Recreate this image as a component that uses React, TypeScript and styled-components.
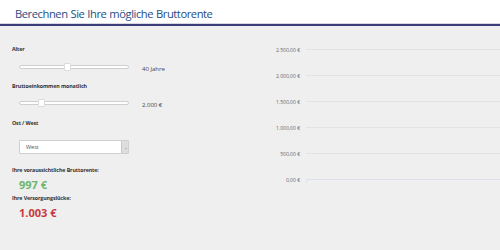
import React from "react";
import styled, { createGlobalStyle } from "styled-components";

const Global = createGlobalStyle`
  html, body { margin: 0; padding: 0; background: #efefef; }
  body { font-family: "Open Sans", "Liberation Sans", sans-serif; width: 500px; height: 250px; overflow: hidden; }
`;

const Header = styled.header`
  height: 23px;
  background: #ffffff;
  border-bottom: 1px solid #d8d8e4;
  display: flex;
  align-items: center;
  padding-left: 15px;
  position: relative;
  &::after {
    content: "";
    position: absolute;
    left: 0;
    right: 0;
    bottom: -3px;
    height: 2px;
    background: #3a3d7c;
  }
`;

const Title = styled.h1`
  margin: 0;
  font-family: "Open Sans", sans-serif;
  font-weight: 400;
  font-size: 11.2px;
  letter-spacing: -0.45px;
  word-spacing: 0.5px;
  color: #1e4e86;
  padding-top: 3px;
`;

const Body = styled.main`
  display: flex;
  padding-top: 3px;
`;

const Form = styled.section`
  width: 250px;
  padding-left: 12px;
  box-sizing: border-box;
  display: flex;
  flex-direction: column;
`;

const Label = styled.div<{ $mt: number }>`
  margin-top: ${(p) => p.$mt}px;
  font-size: 5.3px;
  font-weight: 700;
  letter-spacing: -0.1px;
  color: #333;
  line-height: 8px;
  height: 8px;
`;

const SliderRow = styled.div<{ $mt: number }>`
  margin-top: ${(p) => p.$mt}px;
  display: flex;
  align-items: center;
  height: 10px;
  padding-left: 7px;
`;

const Track = styled.div`
  position: relative;
  width: 110px;
  height: 4px;
  box-sizing: border-box;
  background: #fff;
  border: 1px solid #cfcfcf;
  border-radius: 3px;
`;

const Thumb = styled.div`
  position: absolute;
  top: -3px;
  width: 7px;
  height: 8px;
  box-sizing: border-box;
  background: #fff;
  border: 1px solid #dcdcdc;
  border-radius: 1px;
`;

const Value = styled.span`
  margin-left: 13px;
  font-size: 6px;
  color: #444;
  padding-top: 4px;
`;

const Select = styled.div<{ $mt: number }>`
  margin-top: ${(p) => p.$mt}px;
  margin-left: 7px;
  width: 110px;
  height: 14px;
  box-sizing: border-box;
  background: #fff;
  border: 1px solid #cfcfcf;
  border-radius: 1px;
  display: flex;
  align-items: center;
`;

const SelectText = styled.span`
  flex: 1;
  padding-left: 6px;
  font-size: 5.5px;
  color: #555;
`;

const Arrow = styled.span`
  width: 6px;
  height: 12px;
  background: #dedede;
  border-left: 1px solid #c8c8c8;
  display: flex;
  align-items: center;
  justify-content: center;
  font-size: 4px;
  color: #666;
`;

const Amount = styled.div<{ $color: string; $mt: number }>`
  margin-top: ${(p) => p.$mt}px;
  padding-left: 7px;
  font-size: 11px;
  font-weight: 700;
  line-height: 14px;
  height: 14px;
  color: ${(p) => p.$color};
`;

const Chart = styled.section`
  flex: 1;
  display: flex;
  flex-direction: column;
  padding-top: 22px;
`;

const GridRow = styled.div`
  height: 26px;
  display: flex;
  align-items: flex-start;
`;

const Tick = styled.span`
  width: 50px;
  text-align: right;
  font-size: 5px;
  color: #666;
  line-height: 6px;
  margin-top: -2px;
`;

const Line = styled.div<{ $base?: boolean }>`
  flex: 1;
  margin-left: 6px;
  height: 1px;
  background: ${(p) => (p.$base ? "#dde2ea" : "#e3e3e3")};
  position: relative;
  ${(p) =>
    p.$base &&
    `&::before { content: ""; position: absolute; left: 0; top: 0; width: 1px; height: 4px; background: #dde2ea; }`}
`;

const ticks = ["2.500,00 €", "2.000,00 €", "1.500,00 €", "1.000,00 €", "500,00 €", "0,00 €"];

export default function App() {
  return (
    <>
      <Global />
      <Header>
        <Title>Berechnen Sie Ihre mögliche Bruttorente</Title>
      </Header>
      <Body>
        <Form>
          <Label $mt={18}>Alter</Label>
          <SliderRow $mt={9}>
            <Track>
              <Thumb style={{ left: 44 }} />
            </Track>
            <Value>40 Jahre</Value>
          </SliderRow>
          <Label $mt={10}>Bruttoeinkommen monatlich</Label>
          <SliderRow $mt={8}>
            <Track>
              <Thumb style={{ left: 18 }} />
            </Track>
            <Value>2.000 €</Value>
          </SliderRow>
          <Label $mt={11}>Ost / West</Label>
          <Select $mt={13}>
            <SelectText>West</SelectText>
            <Arrow>⌄</Arrow>
          </Select>
          <Label $mt={12}>Ihre voraussichtliche Bruttorente:</Label>
          <Amount $color="#6cb56c" $mt={4}>997 €</Amount>
          <Label $mt={2}>Ihre Versorgungslücke:</Label>
          <Amount $color="#c9393d" $mt={4}>1.003 €</Amount>
        </Form>
        <Chart>
          {ticks.map((t, i) => (
            <GridRow key={t}>
              <Tick>{t}</Tick>
              <Line $base={i === ticks.length - 1} />
            </GridRow>
          ))}
        </Chart>
      </Body>
    </>
  );
}
